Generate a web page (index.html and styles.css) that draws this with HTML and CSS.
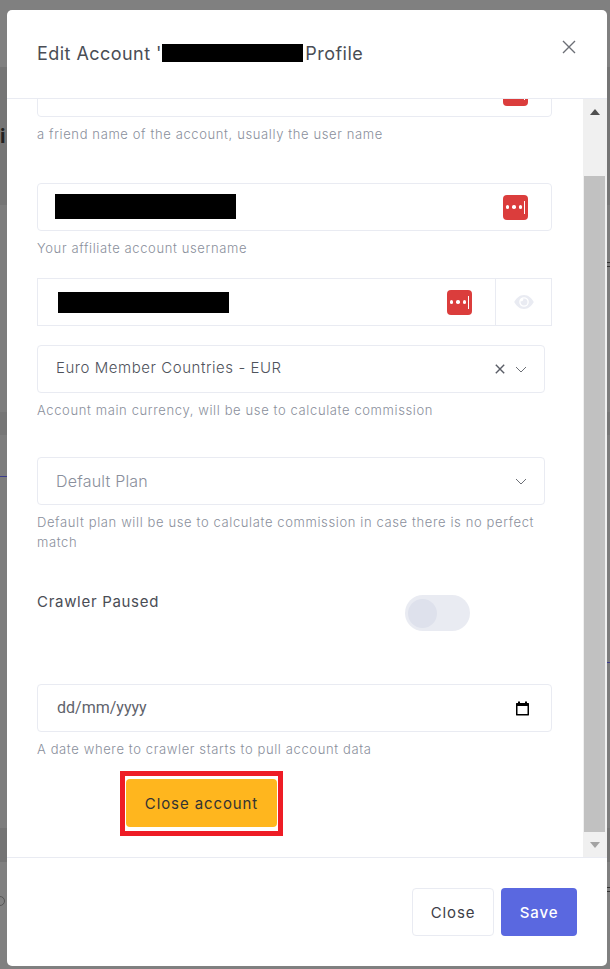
FILE: index.html
```html
<!DOCTYPE html>
<html lang="en">
<head>
    <meta charset="UTF-8">
    <meta name="viewport" content="width=device-width, initial-scale=1.0">
    <title>Edit Account</title>
    <link rel="stylesheet" href="styles.css">
</head>
<body>
    <!-- page behind the overlay, only its edges show -->
    <div class="backdrop">
        <span class="back-i">i</span>
        <span class="back-ring"></span>
        <span class="back-line back-line-left"></span>
        <span class="back-line back-line-right"></span>
        <span class="back-dash back-dash-top"></span>
        <span class="back-dash back-dash-bottom"></span>
    </div>

    <div class="modal">
        <!-- header -->
        <div class="modal-header">
            <h5 class="modal-title">Edit Account '<span class="redact redact-title"></span> Profile</h5>
            <svg class="close-x" width="14" height="14" viewBox="0 0 14 14"><path d="M1 1l12 12M13 1L1 13" /></svg>
        </div>

        <!-- scrolled form -->
        <div class="modal-body">
            <div class="form">
                <div class="field field-first">
                    <div class="input">
                        <span class="pass-icon"><i></i><i></i><i></i><b></b></span>
                    </div>
                    <p class="hint">a friend name of the account, usually the user name</p>
                </div>

                <div class="field field-user">
                    <div class="input">
                        <span class="redact redact-user"></span>
                        <span class="pass-icon"><i></i><i></i><i></i><b></b></span>
                    </div>
                    <p class="hint">Your affiliate account username</p>
                </div>

                <div class="field field-pass">
                    <div class="input-group">
                        <div class="input">
                            <span class="redact redact-pass"></span>
                            <span class="pass-icon"><i></i><i></i><i></i><b></b></span>
                        </div>
                        <div class="addon">
                            <svg width="20" height="14" viewBox="0 0 20 14"><path fill="#e9ebf2" fill-rule="evenodd" d="M10 0c4.500 0 8 3.400 9.800 7C18 10.600 14.500 14 10 14S2 10.600.2 7C2 3.400 5.500 0 10 0zm0 2.200A4.800 4.800 0 1 0 10 11.800 4.800 4.800 0 0 0 10 2.200zm0 1.300a3.500 3.500 0 0 1 0 7 3.500 3.500 0 0 1-3.400-4.300A2 2 0 0 0 9.200 3.600c.3-.1.500-.1.800-.1z"/></svg>
                        </div>
                    </div>
                </div>

                <div class="field field-currency">
                    <div class="select">
                        <span class="select-value">Euro Member Countries - EUR</span>
                        <svg class="clear-x" width="10" height="10" viewBox="0 0 10 10"><path d="M.8.8l8.400 8.400M9.200.8L.8 9.200" /></svg>
                        <svg class="chevron" width="12" height="7" viewBox="0 0 12 7"><path d="M1 1l5 5 5-5" /></svg>
                    </div>
                    <p class="hint">Account main currency, will be use to calculate commission</p>
                </div>

                <div class="field field-plan">
                    <div class="select">
                        <span class="select-value placeholder">Default Plan</span>
                        <svg class="chevron" width="12" height="7" viewBox="0 0 12 7"><path d="M1 1l5 5 5-5" /></svg>
                    </div>
                    <p class="hint">Default plan will be use to calculate commission in case there is no perfect match</p>
                </div>

                <div class="switch-row">
                    <label class="switch-label">Crawler Paused</label>
                    <span class="switch"><span class="knob"></span></span>
                </div>

                <div class="field field-date">
                    <div class="input date-input">
                        <span class="date-value">dd/mm/yyyy</span>
                        <svg width="15" height="15" viewBox="0 0 15 15"><path d="M3 .5h2V2h5V.5h2V2h1.500c.3 0 .5.2.5.5v11.500c0 .3-.2.5-.5.5h-12c-.3 0-.5-.2-.5-.5V2.500c0-.3.2-.5.5-.5H3zM2.500 5v8h10V5z"/></svg>
                    </div>
                    <p class="hint">A date where to crawler starts to pull account data</p>
                </div>

                <div class="close-mark">
                    <button class="btn btn-warning">Close account</button>
                </div>
            </div>

            <!-- scrollbar -->
            <div class="scrollbar">
                <span class="arrow arrow-up"></span>
                <span class="thumb"></span>
                <span class="arrow arrow-down"></span>
            </div>
        </div>

        <!-- footer -->
        <div class="modal-footer">
            <button class="btn btn-light">Close</button>
            <button class="btn btn-primary">Save</button>
        </div>
    </div>
</body>
</html>
```

FILE: styles.css
```css
* {
    box-sizing: border-box;
}

html, body {
    height: 100%;
}

body {
    margin: 0;
    padding: 10px 3px 3px 7px;
    overflow: hidden;
    background-color: #808080;
    font-family: "Inter", "Noto Sans", sans-serif;
    color: #495057;
}

p {
    margin: 0;
}

.backdrop {
    position: absolute;
    inset: 0;
    background-image: linear-gradient(to bottom,
        #808080 0, #808080 67px,
        #757575 67px, #757575 205px,
        #7d7d7d 205px, #7d7d7d 412px,
        #767676 412px, #767676 435px,
        #7d7d7d 435px, #7d7d7d 828px,
        #747474 828px, #747474 862px,
        #808080 862px);
}

.back-i {
    position: absolute;
    left: 0;
    top: 124px;
    font-size: 20px;
    font-weight: 700;
    color: #222;
}

.back-ring {
    position: absolute;
    left: -5px;
    top: 896px;
    width: 10px;
    height: 10px;
    border: 1px solid #555;
    border-radius: 50%;
}

.back-line {
    position: absolute;
    height: 1px;
    background-color: #3c3c8c;
}

.back-line-left {
    left: 0;
    top: 476px;
    width: 7px;
}

.back-line-right {
    left: 607px;
    top: 662px;
    width: 3px;
}

.back-dash {
    position: absolute;
    left: 607px;
    width: 3px;
    height: 5px;
    border-top: 1px solid #333;
    border-bottom: 1px solid #333;
}

.back-dash-top {
    top: 262px;
}

.back-dash-bottom {
    top: 887px;
}

.modal {
    position: relative;
    display: flex;
    flex-direction: column;
    width: 600px;
    height: 956px;
    background-color: #fff;
    border-radius: 5px;
    overflow: hidden;
}

.modal-header {
    display: flex;
    justify-content: space-between;
    height: 89px;
    padding: 33px 31px 0 30px;
    border-bottom: 1px solid #e9ebf2;
}

.modal-title {
    margin: 0;
    font-size: 18px;
    line-height: 22px;
    font-weight: 400;
    letter-spacing: 0.45px;
    color: #4a4d55;
}

.close-x {
    margin-top: -3px;
    stroke: #6c6f76;
    stroke-width: 1.4;
    fill: none;
}

.redact {
    display: inline-block;
    background-color: #000;
}

.redact-title {
    width: 141px;
    height: 18px;
    margin-right: -3px;
    vertical-align: -2px;
}

.redact-user {
    width: 181px;
    height: 25px;
    margin: -2px 0 0 17px;
}

.redact-pass {
    width: 171px;
    height: 21px;
    margin-left: 20px;
}

.modal-body {
    display: flex;
    flex: 1;
    min-height: 0;
}

.form {
    flex: 1;
    min-width: 0;
    padding-left: 30px;
    overflow: hidden;
}

.field {
    width: 515px;
}

.field-first {
    margin-top: -30px;
}

.field-user {
    margin-top: 39px;
}

.field-pass {
    margin-top: 20px;
}

.field-currency {
    margin-top: 19px;
}

.field-plan {
    margin-top: 37px;
}

.field-date {
    margin-top: 53px;
}

.input {
    display: flex;
    align-items: center;
    height: 48px;
    padding-right: 23.500px;
    border: 1px solid #e9ebf2;
    border-radius: 4px;
    background-color: #fff;
}

.input-group {
    display: flex;
    height: 48px;
}

.input-group .input {
    flex: 1;
    border-radius: 0;
    border-right: 0;
}

.addon {
    display: flex;
    align-items: center;
    justify-content: center;
    width: 57px;
    border: 1px solid #e9ebf2;
}

.pass-icon {
    display: flex;
    align-items: center;
    gap: 3px;
    width: 25px;
    height: 25px;
    margin-left: auto;
    padding-left: 3px;
    border-radius: 4px;
    background-color: #db3d3c;
}

.pass-icon i {
    flex: none;
    width: 3.500px;
    height: 3.500px;
    border-radius: 50%;
    background-color: #fff;
}

.pass-icon b {
    flex: none;
    width: 1px;
    height: 13px;
    margin-left: -1px;
    background-color: #fff;
}

.hint {
    margin-top: 7px;
    font-size: 13px;
    font-weight: 300;
    line-height: 20px;
    letter-spacing: 0.62px;
    color: #8a8f9c;
}

.select {
    display: flex;
    align-items: center;
    width: 508px;
    height: 48px;
    padding: 0 18px;
    border: 1px solid #e9ebf2;
    border-radius: 4px;
}

.select-value {
    flex: 1;
    margin-top: -3px;
    font-size: 15px;
    font-weight: 300;
    letter-spacing: 0.55px;
    color: #4f535c;
}

.select-value.placeholder {
    margin-top: 0;
    font-size: 16px;
    letter-spacing: 0.2px;
    color: #8a8f9c;
}

.clear-x {
    margin-right: 10px;
    stroke: #5a5d66;
    stroke-width: 1.400;
    fill: none;
}

.chevron {
    margin-right: -1px;
    stroke: #6c6f76;
    stroke-width: 1;
    fill: none;
}

.switch-row {
    display: flex;
    justify-content: space-between;
    height: 41px;
    width: 433px;
    margin-top: 38px;
}

.switch-label {
    font-size: 15px;
    line-height: 24px;
    letter-spacing: 0.7px;
    color: #4a4d55;
}

.switch {
    display: flex;
    align-items: center;
    width: 65px;
    height: 36px;
    margin-top: 5px;
    padding-left: 3px;
    border-radius: 18px;
    background-color: #e9ebf2;
}

.knob {
    width: 29px;
    height: 29px;
    border-radius: 50%;
    background-color: #dee1ec;
}

.date-input {
    justify-content: space-between;
    padding: 0 21px 0 19px;
}

.date-value {
    margin-top: -2px;
    font-family: "Roboto", sans-serif;
    font-size: 16px;
    color: #5f636c;
}

.close-mark {
    display: inline-block;
    margin: 12px 0 0 83px;
    padding: 3px 1px 4px;
    border: 5px solid #ee1c25;
}

.btn {
    height: 48px;
    border-radius: 4px;
    border: 1px solid transparent;
    font-family: "Inter", "Noto Sans", sans-serif;
    font-size: 15px;
    letter-spacing: 0.9px;
    cursor: pointer;
}

.btn-warning {
    display: block;
    width: 151px;
    background-color: #ffb61e;
    color: #333;
}

.btn-light {
    width: 82px;
    background-color: #fff;
    border-color: #e9ebf2;
    color: #3d4048;
}

.btn-primary {
    width: 76px;
    background-color: #5a68e0;
    color: #fff;
    font-weight: 500;
}

.scrollbar {
    display: flex;
    flex-direction: column;
    width: 24px;
    padding-left: 1px;
    background-color: #f0f0f0;
}

.thumb {
    flex: none;
    width: 21px;
    height: 656px;
    margin-top: 61px;
    background-color: #c1c1c1;
}

.arrow {
    flex: none;
    width: 0;
    height: 0;
    border-left: 5.500px solid transparent;
    border-right: 5.500px solid transparent;
}

.arrow-up {
    margin: 10px 0 0 6px;
    border-bottom: 6px solid #505050;
}

.arrow-down {
    margin: 10px 0 0 6px;
    border-top: 6px solid #a3a3a3;
}

.modal-footer {
    display: flex;
    justify-content: flex-end;
    gap: 7px;
    height: 109px;
    padding: 30px 30px 0 0;
    border-top: 1px solid #e9ebf2;
}
```
